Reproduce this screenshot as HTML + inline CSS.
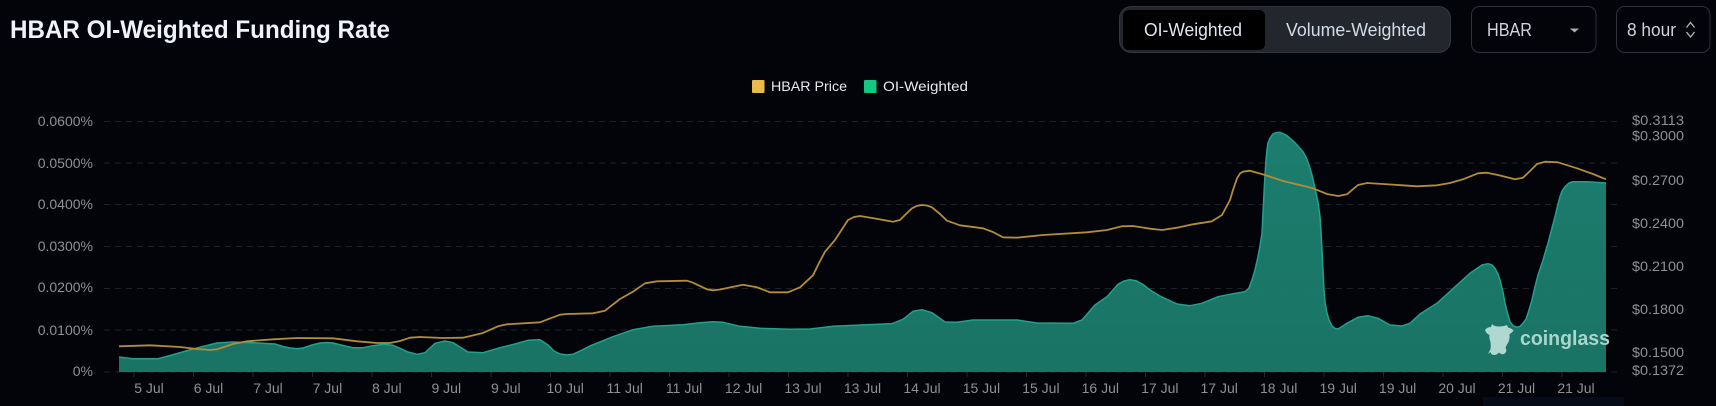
<!DOCTYPE html>
<html>
<head>
<meta charset="utf-8">
<style>
html,body{margin:0;padding:0;background:#02040a;width:1716px;height:406px;overflow:hidden}
svg{display:block;font-family:"Liberation Sans",sans-serif}
.a{font-size:14px;fill:#8f9093}
.e{text-anchor:end}
.m{text-anchor:middle}
.c{font-size:18px}
</style>
</head>
<body>
<svg width="1716" height="406" viewBox="0 0 1716 406" xmlns="http://www.w3.org/2000/svg">
<defs>
<linearGradient id="g" x1="0" y1="132" x2="0" y2="372" gradientUnits="userSpaceOnUse">
<stop offset="0" stop-color="#1d8272"/><stop offset="1" stop-color="#1a7868"/>
</linearGradient>
</defs>
<rect width="1716" height="406" fill="#02040a"/>
<rect x="1483" y="397" width="141" height="9" fill="#050b17"/>

<text x="10" y="38" font-size="25" font-weight="700" fill="#f0f3f9" textLength="380" lengthAdjust="spacingAndGlyphs">HBAR OI-Weighted Funding Rate</text>

<!-- toggle -->
<rect x="1119.500" y="6.500" width="331" height="46" rx="12" fill="#23262d" stroke="#34373e"/>
<rect x="1123" y="10" width="142" height="40" rx="6" fill="#000"/>
<text class="c" x="1144" y="36" fill="#dfe6f2" textLength="98" lengthAdjust="spacingAndGlyphs">OI-Weighted</text>
<text class="c" x="1286" y="36" fill="#d3dbe8" textLength="140" lengthAdjust="spacingAndGlyphs">Volume-Weighted</text>

<!-- selects -->
<rect x="1471.500" y="6.500" width="124.500" height="46" rx="8" fill="none" stroke="#2e3138"/>
<text class="c" x="1487" y="36" fill="#d0d4da" textLength="45" lengthAdjust="spacingAndGlyphs">HBAR</text>
<path d="M1570 28.500H1579L1574.500 32.500Z" fill="#a9adb3"/>
<rect x="1616.500" y="6.500" width="93.500" height="46" rx="8" fill="none" stroke="#2e3138"/>
<text class="c" x="1627" y="36" fill="#d0d4da" textLength="49" lengthAdjust="spacingAndGlyphs">8 hour</text>
<path d="M1686.500 27.500L1690.500 22.500L1694.500 27.500M1686.500 32L1690.500 37L1694.500 32" fill="none" stroke="#b5b8bd" stroke-width="1.300"/>

<!-- legend -->
<rect x="752" y="80" width="12.500" height="13" rx="1" fill="#e9b94f"/>
<text x="771" y="91" font-size="14" fill="#e6e8ee" textLength="76" lengthAdjust="spacingAndGlyphs">HBAR Price</text>
<rect x="864" y="80" width="12.500" height="13" rx="1" fill="#16c784"/>
<text x="883" y="91" font-size="14" fill="#e6e8ee" textLength="85" lengthAdjust="spacingAndGlyphs">OI-Weighted</text>

<!-- grid -->
<g stroke="#1f2227" stroke-width="1" stroke-dasharray="6 5" fill="none">
<path d="M104 121.500H1622M104 163H1622M104 204.500H1622M104 246.500H1622M104 288.500H1622M104 330H1622M104 372H1622"/>
</g>

<!-- left axis -->
<text class="a e" x="93" y="126">0.0600%</text>
<text class="a e" x="93" y="168">0.0500%</text>
<text class="a e" x="93" y="209">0.0400%</text>
<text class="a e" x="93" y="251">0.0300%</text>
<text class="a e" x="93" y="292">0.0200%</text>
<text class="a e" x="93" y="335">0.0100%</text>
<text class="a e" x="93" y="376">0%</text>

<!-- right axis -->
<text class="a" x="1632" y="125" textLength="52" lengthAdjust="spacingAndGlyphs">$0.3113</text>
<text class="a" x="1632" y="140.500" textLength="52" lengthAdjust="spacingAndGlyphs">$0.3000</text>
<text class="a" x="1632" y="185" textLength="52" lengthAdjust="spacingAndGlyphs">$0.2700</text>
<text class="a" x="1632" y="228" textLength="52" lengthAdjust="spacingAndGlyphs">$0.2400</text>
<text class="a" x="1632" y="271" textLength="52" lengthAdjust="spacingAndGlyphs">$0.2100</text>
<text class="a" x="1632" y="314" textLength="52" lengthAdjust="spacingAndGlyphs">$0.1800</text>
<text class="a" x="1632" y="357" textLength="52" lengthAdjust="spacingAndGlyphs">$0.1500</text>
<text class="a" x="1632" y="375" textLength="52" lengthAdjust="spacingAndGlyphs">$0.1372</text>

<!-- ticks -->
<path stroke="#25282d" fill="none" d="M134 372v5M193.500 372v5M253 372v5M312.500 372v5M372 372v5M431.500 372v5M491 372v5M550.500 372v5M610 372v5M669.500 372v5M729 372v5M788.500 372v5M848 372v5M907.500 372v5M967 372v5M1026.500 372v5M1086 372v5M1145.500 372v5M1205 372v5M1264.500 372v5M1324 372v5M1383.500 372v5M1443 372v5M1502.500 372v5M1562 372v5"/>

<!-- x labels -->
<text class="a m" x="149" y="393">5 Jul</text>
<text class="a m" x="208.500" y="393">6 Jul</text>
<text class="a m" x="268" y="393">7 Jul</text>
<text class="a m" x="327.400" y="393">7 Jul</text>
<text class="a m" x="386.800" y="393">8 Jul</text>
<text class="a m" x="446.300" y="393">9 Jul</text>
<text class="a m" x="505.800" y="393">9 Jul</text>
<text class="a m" x="565.200" y="393">10 Jul</text>
<text class="a m" x="624.700" y="393">11 Jul</text>
<text class="a m" x="684.100" y="393">11 Jul</text>
<text class="a m" x="743.600" y="393">12 Jul</text>
<text class="a m" x="803" y="393">13 Jul</text>
<text class="a m" x="862.500" y="393">13 Jul</text>
<text class="a m" x="922" y="393">14 Jul</text>
<text class="a m" x="981.400" y="393">15 Jul</text>
<text class="a m" x="1040.900" y="393">15 Jul</text>
<text class="a m" x="1100.300" y="393">16 Jul</text>
<text class="a m" x="1159.800" y="393">17 Jul</text>
<text class="a m" x="1219.200" y="393">17 Jul</text>
<text class="a m" x="1278.700" y="393">18 Jul</text>
<text class="a m" x="1338.200" y="393">19 Jul</text>
<text class="a m" x="1397.600" y="393">19 Jul</text>
<text class="a m" x="1457" y="393">20 Jul</text>
<text class="a m" x="1516.500" y="393">21 Jul</text>
<text class="a m" x="1576" y="393">21 Jul</text>

<!-- teal area -->
<polygon id="ta" fill="url(#g)" fill-opacity=".96" points="119,372 119,357 133,358.700 158,358.700 172,355 193,349 217,343 233,342 253,342.700 275,344 283,346.500 290,348 297,348.700 303,348 312,345 320,343 327,342.500 333,343 345,346 353,347.700 363,347.700 373,345.700 383,344.300 393,345.300 400,348.300 408,352 417,354.300 425,352.700 430,348 435,343.300 445,341 453,342.700 460,347 468,352 483,352.700 500,347.700 515,344 528,340.300 540,339.700 548,345 554,351 560,354 567,355 573,354.300 581,350.500 590,346 613,336.700 633,329.700 653,326.300 683,324.700 700,322.700 713,321.700 723,322.300 740,326.300 760,328.300 790,329.300 810,329 833,326.300 867,324.700 892,323.700 903,319.300 913,311.300 922,309.700 932,312.700 945,322 957,322.300 973,320 1017,320 1037,323 1073,323.300 1082,320 1095,305 1107,296.700 1118,284.300 1124,281 1130,279.700 1136,280.700 1143,284.500 1150,290 1160,296 1177,304 1190,305.700 1202,303.300 1218,296.700 1233,293.700 1245,291.700 1249,288 1252,280 1255,270 1258,256.700 1260,246 1262,233 1263,213 1264,193 1265,175 1266,160 1267,150 1268,143 1270,138 1273,134 1276,132.700 1279,132.300 1283,133.500 1287,135.700 1295,142.700 1303,151.700 1306,157 1309,165 1312,175 1315,188 1318,202 1320,216.700 1321,232 1322,250 1323,270 1324,290 1325,302 1327,313 1329,320 1332,326 1335,328.500 1338,329 1342,326.500 1347,323.300 1358,317.300 1368,315.700 1378,318.300 1390,325 1402,326 1410,323.300 1420,314 1437,303.300 1457,285 1470,273.300 1482,265 1488,263.700 1492,265 1495,268.300 1498,274 1500,280 1503,292 1505,303.300 1508,315 1510,321.700 1513,325.700 1517,327.300 1520,326.300 1523,323.300 1526,319 1528,313.300 1532,300 1535,286.700 1538,275 1542,263.300 1548,243.300 1552,228 1555,216.700 1558,204 1560,196.700 1562,191 1565,186.700 1569,183 1573,181.700 1587,181.700 1606,183 1606,372"/>
<polyline id="tl" fill="none" stroke="#23a08c" stroke-width="1.500" stroke-linejoin="round" points="119,357 133,358.700 158,358.700 172,355 193,349 217,343 233,342 253,342.700 275,344 283,346.500 290,348 297,348.700 303,348 312,345 320,343 327,342.500 333,343 345,346 353,347.700 363,347.700 373,345.700 383,344.300 393,345.300 400,348.300 408,352 417,354.300 425,352.700 430,348 435,343.300 445,341 453,342.700 460,347 468,352 483,352.700 500,347.700 515,344 528,340.300 540,339.700 548,345 554,351 560,354 567,355 573,354.300 581,350.500 590,346 613,336.700 633,329.700 653,326.300 683,324.700 700,322.700 713,321.700 723,322.300 740,326.300 760,328.300 790,329.300 810,329 833,326.300 867,324.700 892,323.700 903,319.300 913,311.300 922,309.700 932,312.700 945,322 957,322.300 973,320 1017,320 1037,323 1073,323.300 1082,320 1095,305 1107,296.700 1118,284.300 1124,281 1130,279.700 1136,280.700 1143,284.500 1150,290 1160,296 1177,304 1190,305.700 1202,303.300 1218,296.700 1233,293.700 1245,291.700 1249,288 1252,280 1255,270 1258,256.700 1260,246 1262,233 1263,213 1264,193 1265,175 1266,160 1267,150 1268,143 1270,138 1273,134 1276,132.700 1279,132.300 1283,133.500 1287,135.700 1295,142.700 1303,151.700 1306,157 1309,165 1312,175 1315,188 1318,202 1320,216.700 1321,232 1322,250 1323,270 1324,290 1325,302 1327,313 1329,320 1332,326 1335,328.500 1338,329 1342,326.500 1347,323.300 1358,317.300 1368,315.700 1378,318.300 1390,325 1402,326 1410,323.300 1420,314 1437,303.300 1457,285 1470,273.300 1482,265 1488,263.700 1492,265 1495,268.300 1498,274 1500,280 1503,292 1505,303.300 1508,315 1510,321.700 1513,325.700 1517,327.300 1520,326.300 1523,323.300 1526,319 1528,313.300 1532,300 1535,286.700 1538,275 1542,263.300 1548,243.300 1552,228 1555,216.700 1558,204 1560,196.700 1562,191 1565,186.700 1569,183 1573,181.700 1587,181.700 1606,183"/>

<!-- gold line -->
<polyline id="gl" fill="none" stroke="#b38c38" stroke-width="1.800" stroke-linejoin="round" points="119,346.300 150,345.300 180,347 197,349 210,350 217,349.300 233,344 247,341.300 273,339.300 297,338 333,338.300 357,341.300 377,343 390,343 400,341 410,337.700 420,337 443,338 463,337.700 482,333.300 498,326.300 507,324.300 540,322.300 560,314.700 567,314 593,313.300 605,310.700 620,299 633,291.700 645,283.300 657,281.300 687,280.700 693,282.700 707,289.300 713,290.300 720,289.500 743,284.700 757,287.300 770,292.300 788,292.300 800,287.300 813,275.300 819,263 825,251.700 835,240 848,220 854,217 860,216 875,218.500 893,221.700 900,220 906,214 912,208.300 917,205.800 922,205 927,205.500 932,207.300 940,214 947,220.700 960,225.300 983,228.300 993,232 1003,237.300 1017,237.700 1043,235 1087,232.300 1107,230 1122,226.300 1133,226 1150,228.700 1162,230 1177,227.700 1193,224.300 1212,221.300 1222,215 1230,200 1233,190 1237,178.300 1240,173.500 1243,171.700 1250,170.700 1265,175 1283,181 1313,188.300 1327,194 1338,196 1347,194.300 1358,185 1367,183 1383,184 1417,186.300 1437,185.300 1450,183 1463,179.300 1478,173.300 1487,172.700 1498,175 1515,179.300 1523,177.700 1530,171 1537,164 1545,161.700 1558,162.300 1577,168.300 1593,174 1606,179.300"/>

<!-- watermark -->
<path fill="#afd8d1" d="M1485 330Q1487 327 1491 327L1492 324Q1494 326.500 1499 326.500Q1504 326.500 1507 325L1508 327.500Q1511 328 1513.500 330.500Q1512 333 1509.500 334Q1510 338 1508.500 342Q1506 346 1505.500 348Q1507 350 1506 352Q1504 355 1501 354L1499 352.500Q1497 355 1494 355Q1491 355 1490.500 352L1488 354L1490.500 349Q1491 346 1490.500 342Q1489 338 1489.500 335Q1486 333.500 1485 330Z"/>
<text x="1520" y="345" font-size="20" font-weight="700" fill="#a8d5cd" textLength="90" lengthAdjust="spacingAndGlyphs">coinglass</text>

<script>
(function(){
  var NS='http://www.w3.org/2000/svg';
  function smooth(s){
    var p=s.trim().split(/\s+/).map(function(a){return a.split(',').map(Number)});
    var d='M'+p[0][0]+' '+p[0][1],t=[];
    for(var i=0;i<p.length;i++){
      var a=p[Math.max(i-1,0)],b=p[Math.min(i+1,p.length-1)];
      var x=b[0]-a[0],y=b[1]-a[1],l=Math.sqrt(x*x+y*y)||1;
      t.push([x/l,y/l]);
    }
    for(var j=0;j<p.length-1;j++){
      var u=p[j],v=p[j+1],dx=v[0]-u[0],dy=v[1]-u[1],k=Math.sqrt(dx*dx+dy*dy)/3;
      d+='C'+(u[0]+t[j][0]*k).toFixed(2)+' '+(u[1]+t[j][1]*k).toFixed(2)+' '+(v[0]-t[j+1][0]*k).toFixed(2)+' '+(v[1]-t[j+1][1]*k).toFixed(2)+' '+v[0]+' '+v[1];
    }
    return d;
  }
  function swap(el,d){
    var n=document.createElementNS(NS,'path');
    for(var i=0;i<el.attributes.length;i++){
      var at=el.attributes[i];
      if(at.name!=='points'&&at.name!=='id')n.setAttribute(at.name,at.value);
    }
    n.setAttribute('d',d);
    el.parentNode.replaceChild(n,el);
  }
  var tl=document.getElementById('tl'),ta=document.getElementById('ta'),gl=document.getElementById('gl');
  var td=smooth(tl.getAttribute('points'));
  swap(ta,td+'L1606 372L119 372Z');
  swap(tl,td);
  swap(gl,smooth(gl.getAttribute('points')));
})();
</script>
</svg>
</body>
</html>
